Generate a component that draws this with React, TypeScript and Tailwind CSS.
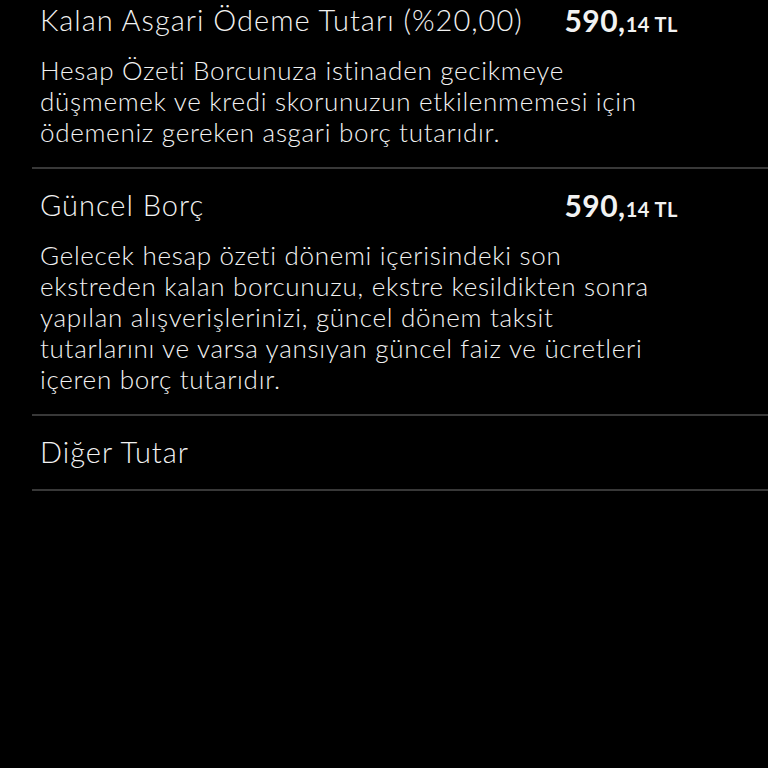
import React from 'react';

type Item = {
  title: string;
  amount?: { main: string; cents: string };
  lines?: string[];
};

const items: Item[] = [
  {
    title: 'Kalan Asgari Ödeme Tutarı (%20,00)',
    amount: { main: '590,', cents: '14 TL' },
    lines: [
      'Hesap Özeti Borcunuza istinaden gecikmeye',
      'düşmemek ve kredi skorunuzun etkilenmemesi için',
      'ödemeniz gereken asgari borç tutarıdır.',
    ],
  },
  {
    title: 'Güncel Borç',
    amount: { main: '590,', cents: '14 TL' },
    lines: [
      'Gelecek hesap özeti dönemi içerisindeki son',
      'ekstreden kalan borcunuzu, ekstre kesildikten sonra',
      'yapılan alışverişlerinizi, güncel dönem taksit',
      'tutarlarını ve varsa yansıyan güncel faiz ve ücretleri',
      'içeren borç tutarıdır.',
    ],
  },
  { title: 'Diğer Tutar' },
];

const App = () => {
  return (
    <div
      className="w-[768px] h-[768px] overflow-hidden bg-black text-[#f2f2f2]"
      style={{ fontFamily: 'Lato, "Open Sans", sans-serif' }}
    >
      <div className="ml-8 -mt-[16px]">
        {items.map((item) => (
          <div key={item.title} className="border-b-2 border-[#383838] pl-2 pr-[90px] pt-[18px] pb-[19px]">
            <div className="flex items-center justify-between h-9">
              <span className="text-[29px] font-light tracking-[1px] whitespace-nowrap">{item.title}</span>
              {item.amount && (
                <span className="font-bold whitespace-nowrap tracking-[0.5px]">
                  <span className="text-[30px]">{item.amount.main}</span>
                  <span className="text-[20px]">{item.amount.cents}</span>
                </span>
              )}
            </div>
            {item.lines && (
              <div className="mt-[17px] text-[26px] leading-[31px] font-light tracking-[0.7px]">
                {item.lines.map((l) => (
                  <div key={l} className="whitespace-nowrap">{l}</div>
                ))}
              </div>
            )}
          </div>
        ))}
      </div>
    </div>
  );
};

export default App;
